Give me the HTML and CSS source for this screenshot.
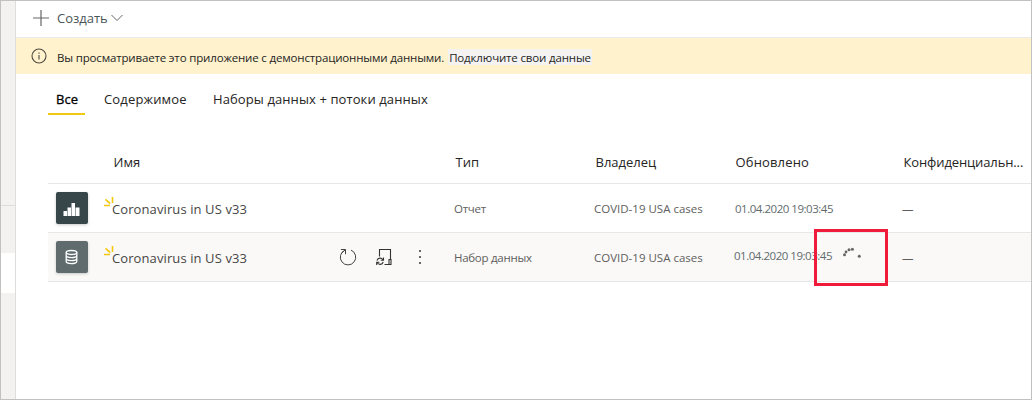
FILE: index.html
```html
<!DOCTYPE html>
<html lang="ru">
<head>
<meta charset="utf-8">
<title>Coronavirus in US v33</title>
<link rel="stylesheet" href="styles.css">
</head>
<body>
<div class="app">
  <nav class="rail"><div class="rail-top"></div><div class="rail-mid"></div><div class="rail-active"></div></nav>
  <main class="main">
    <header class="toolbar">
      <svg class="plus" width="16" height="16" viewBox="0 0 16 16"><path d="M8 0v16M0 8h16" fill="none" stroke="#666" stroke-width="1.2"/></svg>
      <span class="create">Создать</span>
      <svg class="chevron" width="12" height="8" viewBox="0 0 12 8"><path d="M.5 1 6 6.5 11.500 1" fill="none" stroke="#666"/></svg>
    </header>
    <div class="banner">
      <svg class="info" width="16" height="16" viewBox="0 0 16 16"><circle cx="8" cy="8" r="7" fill="none" stroke="#4d4a43" stroke-width="1.1"/><path d="M8 7v4.500M8 4.500v1.200" stroke="#4d4a43" stroke-width="1.100"/></svg>
      <span class="notice">Вы просматриваете это приложение с демонстрационными данными.</span>
      <a class="connect">Подключите свои данные</a>
    </div>
    <div class="tabs">
      <span class="tab tab-all">Все</span>
      <span class="tab tab-content">Содержимое</span>
      <span class="tab tab-data">Наборы данных + потоки данных</span>
    </div>
    <section class="table">
      <div class="row head">
        <span class="h-name">Имя</span><span class="h-type">Тип</span><span class="h-owner">Владелец</span><span class="h-date">Обновлено</span><span class="h-conf">Конфиденциальн...</span>
      </div>
      <div class="row">
        <div class="name">
          <span class="tile report"><svg width="32" height="32" viewBox="0 0 32 32"><path d="M7.500 19h3.500v5H7.500zM11.500 15.500h3.500V24h-3.500zM15.500 11H19v13h-3.500zM19.500 15.500h4V24h-4z" fill="#fff"/></svg></span>
          <svg class="spark" width="10" height="10" viewBox="0 0 10 10"><path d="M0 8.500h6M1.500 2.300l4.700 4.400M8.500 0v6" fill="none" stroke="#f2c811" stroke-width="1.600"/></svg>
          <span class="title">Coronavirus in US v33</span>
        </div>
        <span class="type-report">Отчет</span><span class="owner">COVID-19 USA cases</span><span class="date">01.04.2020 19:03:45</span><span class="dash">—</span>
      </div>
      <div class="row selected">
        <div class="name">
          <span class="tile dataset"><svg width="32" height="32" viewBox="0 0 32 32"><g fill="none" stroke="#fff" stroke-width="1.300"><ellipse cx="15.500" cy="11.500" rx="5.300" ry="2"/><path d="M10.200 11.500v9c0 2.700 10.600 2.700 10.600 0v-9M10.200 14.500c0 2.700 10.600 2.700 10.600 0M10.200 17.500c0 2.700 10.600 2.700 10.600 0"/></g></svg></span>
          <svg class="spark" width="10" height="10" viewBox="0 0 10 10"><path d="M0 8.500h6M1.500 2.300l4.700 4.400M8.500 0v6" fill="none" stroke="#f2c811" stroke-width="1.600"/></svg>
          <span class="title">Coronavirus in US v33</span>
          <span class="actions">
            <svg width="18" height="18" viewBox="0 0 18 18"><path d="M12 2.100A7.700 7.700 0 1 1 5.800 2.200M1.900 1.500h4.600v4.700M6.500 1.500 2.500 5.500" fill="none" stroke="#444" stroke-width="1"/></svg>
            <svg width="17" height="18" viewBox="0 0 17 18"><path d="M3.500 8.500v-7h11v10M8.500 16.500h6.500v-5h-2v5M1 12.500c1-3 4.500-3 6-.8M7.500 9.500v2.800H4.800M7.200 14c-1 3-4.500 3-6 .8M.7 17v-2.800h2.700" fill="none" stroke="#333" stroke-width="1.100"/></svg>
            <svg width="4" height="18" viewBox="0 0 4 18"><path d="M1 2h2v2H1zM1 8h2v2H1zM1 14h2v2H1z" fill="#666"/></svg>
          </span>
        </div>
        <span class="type-data">Набор данных</span><span class="owner">COVID-19 USA cases</span>
        <span class="date refreshing">01.04.2020 19:03:45</span><span class="dash">—</span>
        <svg class="spinner" width="20" height="12" viewBox="0 0 20 12"><g fill="#666"><circle cx="2.500" cy="7.800" r="1.500"/><circle cx="4" cy="5" r="1.400"/><circle cx="7" cy="2.800" r="1.500"/><circle cx="10.400" cy="2.300" r="1.500"/><circle cx="17.300" cy="9.200" r="1.500"/></g></svg>
        <span class="highlight"></span>
      </div>
    </section>
  </main>
</div>
</body>
</html>
```
FILE: styles.css
```css
* { box-sizing: border-box; }
body { margin: 0; font-family: "Open Sans", "Noto Sans", sans-serif; font-size: 13px; color: #252423; background: #fff; }
.app { display: flex; width: 1032px; height: 400px; border: 1px solid #c1c1c1; overflow: hidden; }
.rail { width: 15px; background: #f3f2f1; border-right: 1px solid #dedddc; display: flex; flex-direction: column; }
.rail-top { height: 205px; border-bottom: 1px solid #dedddc; }
.rail-mid { height: 47px; }
.rail-active { height: 40px; background: #fff; }
.main { flex: 1; min-width: 0; }
span, a { white-space: pre; }
.toolbar { height: 37px; border-bottom: 1px solid #eaeaea; display: flex; align-items: center; padding: 0 0 2px 17px; }
.create { margin-left: 8px; color: #4a5557; }
.chevron { margin-left: 3px; }
.banner { height: 36px; background: #fff2cd; display: flex; align-items: center; padding-left: 15px; font-size: 11.5px; letter-spacing: -.16px; }
.notice { margin: 2px 0 0 10px; }
.connect { background: #f4f3f1; height: 16px; line-height: 17px; margin: 2px 0 0 4px; padding: 0 1px; }
.tabs { height: 41px; display: flex; padding-left: 32px; }
.tab { height: 41px; line-height: 51px; }
.tab-all { width: 37px; padding-left: 8px; color: #000; border-bottom: 2px solid #f2c811; -webkit-text-stroke: .3px #000; }
.tab-content { margin-left: 19px; width: 109px; letter-spacing: .15px; }
.tab-data { letter-spacing: .1px; }
.table { margin-left: 32px; padding-top: 26px; }
.row { position: relative; display: grid; grid-template-columns: 406px 140px 140px 168px 1fr; height: 49px; border-bottom: 1px solid #e8e7e6; align-items: center; font-size: 11.5px; color: #605e5c; }
.head { height: 43px; font-size: 13px; color: #252423; }
.head span { padding-left: 1.5px; }
.head .h-name { padding-left: 65.5px; }
.head .h-date { letter-spacing: .15px; }
.head .h-conf { letter-spacing: -.12px; }
.selected { background: #faf9f8; }
.name { display: flex; align-items: center; padding-left: 8px; }
.tile { width: 32px; height: 32px; border-radius: 2px; background: #374649; box-shadow: 0 1px 3px #0003; }
.tile svg { display: block; }
.dataset { background: #5f6b6d; }
.spark { margin: -13px 0 0 16px; }
.title { font-size: 13px; color: #484644; margin: 2px 0 0 -2px; width: 136px; letter-spacing: .1px; }
.actions { display: flex; align-items: center; margin-left: 91px; gap: 19px; }
.actions svg:last-child { margin-left: 6px; }
.type-report, .type-data { letter-spacing: -.28px; }
.date { color: #5f6b6d; letter-spacing: -.48px; padding-left: 1px; }
.refreshing { margin: -4px 0 0 -1px; }
.spinner { position: absolute; left: 794px; top: 14px; }
.highlight { position: absolute; left: 766px; top: -4px; width: 74px; height: 57px; border: 3px solid #f01b3b; }
```
